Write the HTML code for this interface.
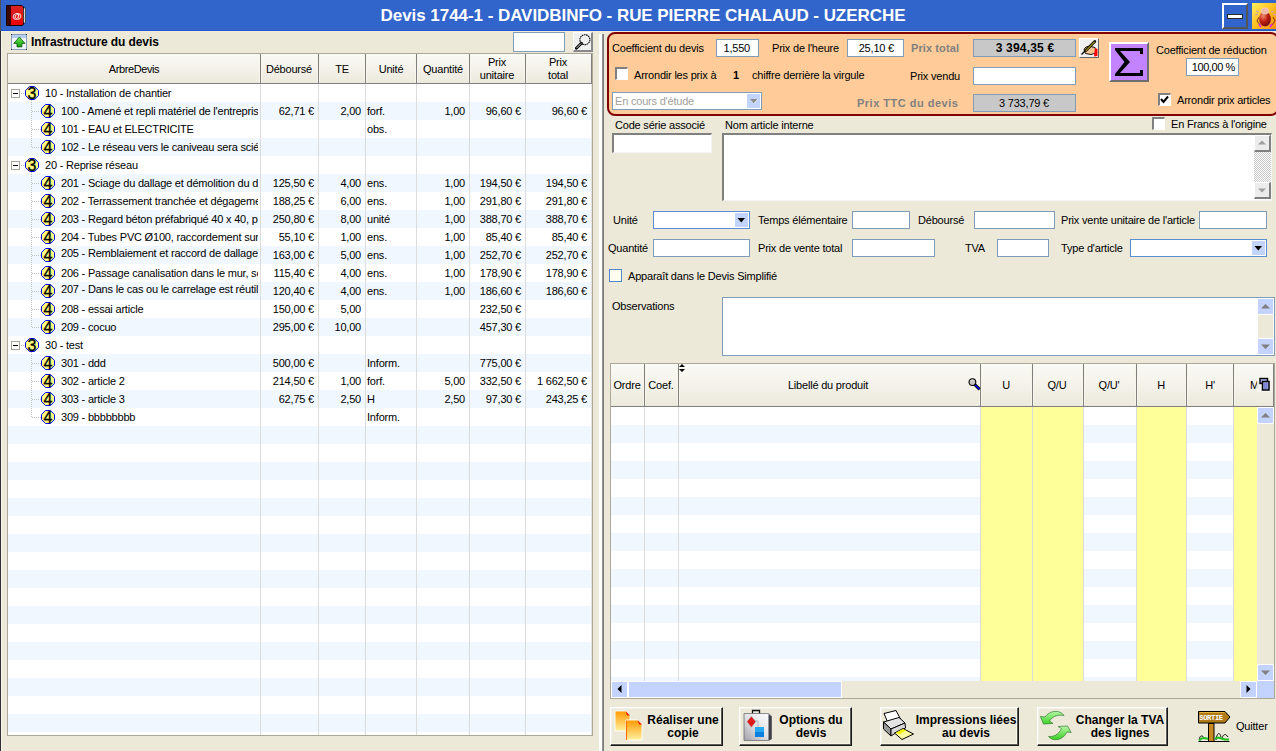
<!DOCTYPE html><html><head><meta charset="utf-8"><style>
html,body{margin:0;padding:0;}
body{width:1276px;height:751px;overflow:hidden;position:relative;background:#ECE9D8;font-family:'Liberation Sans', sans-serif;}
div{box-sizing:border-box;}
svg{position:absolute;}
</style></head><body>
<div style="position:absolute;left:0px;top:0px;width:1276px;height:31px;background:#3165CB;"></div>
<div style="position:absolute;left:0px;top:30px;width:1276px;height:1px;background:#2456C6;"></div>
<div style="position:absolute;left:0px;top:31px;width:1276px;height:1px;background:#F0EDE0;"></div>
<div style="position:absolute;left:0px;top:0px;width:1px;height:31px;background:#505050;"></div>
<div style="position:absolute;left:0px;top:31px;width:1px;height:720px;background:#2E2E34;"></div>
<div style="position:absolute;left:1px;top:31px;width:1px;height:720px;background:#F8F4E6;"></div>
<div style="left:343px;width:600px;text-align:center;position:absolute;top:7px;font-family:'Liberation Sans', sans-serif;font-size:17px;line-height:17px;font-weight:bold;color:#fff;white-space:nowrap;letter-spacing:-0.05px;">Devis 1744-1 - DAVIDBINFO - RUE PIERRE CHALAUD - UZERCHE</div>
<svg style="left:6px;top:5px" width="20" height="21" viewBox="0 0 20 21">
<defs><linearGradient id="rb" x1="0" y1="0" x2="0" y2="1"><stop offset="0" stop-color="#D82424"/><stop offset="1" stop-color="#F00000"/></linearGradient></defs>
<path d="M0.5 0.5 H16 L17.5 2 V19.5 L16 20.5 H0.5 Z" fill="url(#rb)" stroke="#1A0000" stroke-width="1"/>
<rect x="1" y="1" width="4" height="19" fill="#3C0606"/>
<rect x="17.5" y="3" width="2" height="15" fill="#E0E0E0" stroke="#111" stroke-width="0.6"/>
<path d="M17.5 8 H19.5 M17.5 13 H19.5" stroke="#888" stroke-width="0.6"/>
<text x="11.2" y="13.6" text-anchor="middle" font-family="Liberation Sans" font-weight="bold" font-size="9.5" fill="#fff">@</text>
</svg>
<div style="position:absolute;left:1222px;top:3px;width:26px;height:26px;background:#3165CB;border-top:2px solid #fff;border-left:2px solid #fff;border-right:2px solid #555;border-bottom:2px solid #555;"></div>
<div style="position:absolute;left:1228px;top:15px;width:14px;height:3px;background:#fff;outline:1px solid #2A2A2A;"></div>
<svg style="left:1252px;top:3px" width="24" height="26" viewBox="0 0 24 26">
<defs><linearGradient id="bg1" x1="0" y1="0" x2="1" y2="1"><stop offset="0" stop-color="#FFF060"/><stop offset="0.5" stop-color="#FFC020"/><stop offset="1" stop-color="#FF8A00"/></linearGradient>
<radialGradient id="bug" cx="0.35" cy="0.3" r="0.75"><stop offset="0" stop-color="#F09070"/><stop offset="0.5" stop-color="#C02010"/><stop offset="1" stop-color="#700808"/></radialGradient></defs>
<rect width="24" height="26" fill="url(#bg1)"/>
<path d="M7 14 L5 18 L8 22 M21 14 L23 18 L20 22" fill="none" stroke="#803020" stroke-width="1"/>
<path d="M7 21 L9 24 M20 21 L18 24" stroke="#E020E0" stroke-width="1.6"/>
<path d="M4 8 L7 9 M3 12 L6 11 M22 8 L19 9 M24 12 L21 11" stroke="#C0A0C0" stroke-width="1.2"/>
<ellipse cx="13" cy="16" rx="6" ry="7.5" fill="url(#bug)" stroke="#C8A8A8" stroke-width="0.5" stroke-dasharray="1 1"/>
<ellipse cx="13" cy="8" rx="3.8" ry="3.2" fill="#F0B8A8" stroke="#E8E0E0" stroke-width="0.6" stroke-dasharray="1 0.6"/>
</svg>
<svg style="left:11px;top:34px" width="16" height="16" viewBox="0 0 16 16">
<defs><linearGradient id="ga" x1="0" y1="0" x2="0" y2="1"><stop offset="0" stop-color="#70E850"/><stop offset="1" stop-color="#10A010"/></linearGradient></defs>
<rect x="0.5" y="0.5" width="15" height="15" fill="#F0F3FA" stroke="#8C9DBE"/>
<rect x="1" y="1" width="14" height="3" fill="#B4CEF2"/>
<rect x="0" y="0" width="1" height="1" fill="#333"/><rect x="15" y="0" width="1" height="1" fill="#333"/><rect x="0" y="15" width="1" height="1" fill="#333"/><rect x="15" y="15" width="1" height="1" fill="#333"/>
<path d="M8.4 3 L14 9.4 L10.9 9.4 L10.9 12.9 L6 12.9 L6 9.4 L2.8 9.4 Z" fill="url(#ga)" stroke="#0A5A0A" stroke-width="0.8" stroke-linejoin="round"/>
</svg>
<div style="left:31px;position:absolute;top:36px;font-family:'Liberation Sans', sans-serif;font-size:12px;line-height:12px;font-weight:bold;color:#000;white-space:nowrap;letter-spacing:-0.1px;">Infrastructure du devis</div>
<div style="position:absolute;left:513px;top:32px;width:52px;height:20px;background:#fff;border:1px solid #7F9DB9;"></div>
<div style="position:absolute;left:573px;top:32px;width:20px;height:20px;background:#F0F0F0;border-right:2px solid #888;border-bottom:2px solid #888;border-top:1px solid #fff;border-left:1px solid #fff;"></div>
<svg style="left:575px;top:33px" width="16" height="17" viewBox="0 0 16 17">
<circle cx="9.9" cy="6.7" r="5" fill="none" stroke="#000" stroke-width="1.1" stroke-dasharray="1.6 0.6"/>
<path d="M6.4 10.2 L1.3 15.3" stroke="#000" stroke-width="2.8" stroke-linecap="round"/>
<path d="M6.2 10.4 L1.5 15.1" stroke="#E8F0E8" stroke-width="0.9"/>
</svg>
<div style="position:absolute;left:7px;top:53px;width:586px;height:683px;background:#fff;border:1px solid #ACA899;"></div>
<div style="position:absolute;left:8px;top:102px;width:583px;height:18px;background:#F0F7FE;"></div>
<div style="position:absolute;left:8px;top:138px;width:583px;height:18px;background:#F0F7FE;"></div>
<div style="position:absolute;left:8px;top:174px;width:583px;height:18px;background:#F0F7FE;"></div>
<div style="position:absolute;left:8px;top:210px;width:583px;height:18px;background:#F0F7FE;"></div>
<div style="position:absolute;left:8px;top:246px;width:583px;height:18px;background:#F0F7FE;"></div>
<div style="position:absolute;left:8px;top:282px;width:583px;height:18px;background:#F0F7FE;"></div>
<div style="position:absolute;left:8px;top:318px;width:583px;height:18px;background:#F0F7FE;"></div>
<div style="position:absolute;left:8px;top:354px;width:583px;height:18px;background:#F0F7FE;"></div>
<div style="position:absolute;left:8px;top:390px;width:583px;height:18px;background:#F0F7FE;"></div>
<div style="position:absolute;left:8px;top:426px;width:583px;height:18px;background:#F0F7FE;"></div>
<div style="position:absolute;left:8px;top:462px;width:583px;height:18px;background:#F0F7FE;"></div>
<div style="position:absolute;left:8px;top:498px;width:583px;height:18px;background:#F0F7FE;"></div>
<div style="position:absolute;left:8px;top:534px;width:583px;height:18px;background:#F0F7FE;"></div>
<div style="position:absolute;left:8px;top:570px;width:583px;height:18px;background:#F0F7FE;"></div>
<div style="position:absolute;left:8px;top:606px;width:583px;height:18px;background:#F0F7FE;"></div>
<div style="position:absolute;left:8px;top:642px;width:583px;height:18px;background:#F0F7FE;"></div>
<div style="position:absolute;left:8px;top:678px;width:583px;height:18px;background:#F0F7FE;"></div>
<div style="position:absolute;left:8px;top:714px;width:583px;height:18px;background:#F0F7FE;"></div>
<div style="position:absolute;left:8px;top:54px;width:584px;height:30px;background:linear-gradient(#FAFAF6,#F4F2EA 50%,#ECE9DC);border-bottom:1px solid #808080;"></div>
<div style="position:absolute;left:591px;top:54px;width:1px;height:30px;background:#808080;"></div>
<div style="position:absolute;left:591px;top:84px;width:1px;height:651px;background:#E4E4E4;"></div>
<div style="position:absolute;left:260px;top:54px;width:1px;height:29px;background:#808080;"></div>
<div style="position:absolute;left:259px;top:55px;width:1px;height:27px;background:#F8F6EA;"></div>
<div style="position:absolute;left:261px;top:55px;width:1px;height:27px;background:#F8F6EA;"></div>
<div style="position:absolute;left:260px;top:84px;width:1px;height:651px;background:#DCDCDC;"></div>
<div style="position:absolute;left:318px;top:54px;width:1px;height:29px;background:#808080;"></div>
<div style="position:absolute;left:317px;top:55px;width:1px;height:27px;background:#F8F6EA;"></div>
<div style="position:absolute;left:319px;top:55px;width:1px;height:27px;background:#F8F6EA;"></div>
<div style="position:absolute;left:318px;top:84px;width:1px;height:651px;background:#DCDCDC;"></div>
<div style="position:absolute;left:365px;top:54px;width:1px;height:29px;background:#808080;"></div>
<div style="position:absolute;left:364px;top:55px;width:1px;height:27px;background:#F8F6EA;"></div>
<div style="position:absolute;left:366px;top:55px;width:1px;height:27px;background:#F8F6EA;"></div>
<div style="position:absolute;left:365px;top:84px;width:1px;height:651px;background:#DCDCDC;"></div>
<div style="position:absolute;left:416px;top:54px;width:1px;height:29px;background:#808080;"></div>
<div style="position:absolute;left:415px;top:55px;width:1px;height:27px;background:#F8F6EA;"></div>
<div style="position:absolute;left:417px;top:55px;width:1px;height:27px;background:#F8F6EA;"></div>
<div style="position:absolute;left:416px;top:84px;width:1px;height:651px;background:#DCDCDC;"></div>
<div style="position:absolute;left:469px;top:54px;width:1px;height:29px;background:#808080;"></div>
<div style="position:absolute;left:468px;top:55px;width:1px;height:27px;background:#F8F6EA;"></div>
<div style="position:absolute;left:470px;top:55px;width:1px;height:27px;background:#F8F6EA;"></div>
<div style="position:absolute;left:469px;top:84px;width:1px;height:651px;background:#DCDCDC;"></div>
<div style="position:absolute;left:525px;top:54px;width:1px;height:29px;background:#808080;"></div>
<div style="position:absolute;left:524px;top:55px;width:1px;height:27px;background:#F8F6EA;"></div>
<div style="position:absolute;left:526px;top:55px;width:1px;height:27px;background:#F8F6EA;"></div>
<div style="position:absolute;left:525px;top:84px;width:1px;height:651px;background:#DCDCDC;"></div>
<div style="left:-166px;width:600px;text-align:center;position:absolute;top:64px;font-family:'Liberation Sans', sans-serif;font-size:11px;line-height:11px;font-weight:normal;color:#000;white-space:nowrap;letter-spacing:-0.4px;">ArbreDevis</div>
<div style="left:-11px;width:600px;text-align:center;position:absolute;top:64px;font-family:'Liberation Sans', sans-serif;font-size:11px;line-height:11px;font-weight:normal;color:#000;white-space:nowrap;letter-spacing:-0.2px;">Déboursé</div>
<div style="left:42px;width:600px;text-align:center;position:absolute;top:64px;font-family:'Liberation Sans', sans-serif;font-size:11px;line-height:11px;font-weight:normal;color:#000;white-space:nowrap;letter-spacing:-0.2px;">TE</div>
<div style="left:91px;width:600px;text-align:center;position:absolute;top:64px;font-family:'Liberation Sans', sans-serif;font-size:11px;line-height:11px;font-weight:normal;color:#000;white-space:nowrap;letter-spacing:-0.2px;">Unité</div>
<div style="left:143px;width:600px;text-align:center;position:absolute;top:64px;font-family:'Liberation Sans', sans-serif;font-size:11px;line-height:11px;font-weight:normal;color:#000;white-space:nowrap;letter-spacing:-0.2px;">Quantité</div>
<div style="left:197px;width:600px;text-align:center;position:absolute;top:57px;font-family:'Liberation Sans', sans-serif;font-size:11px;line-height:11px;font-weight:normal;color:#000;white-space:nowrap;letter-spacing:-0.2px;">Prix</div>
<div style="left:197px;width:600px;text-align:center;position:absolute;top:70px;font-family:'Liberation Sans', sans-serif;font-size:11px;line-height:11px;font-weight:normal;color:#000;white-space:nowrap;letter-spacing:-0.2px;">unitaire</div>
<div style="left:258px;width:600px;text-align:center;position:absolute;top:57px;font-family:'Liberation Sans', sans-serif;font-size:11px;line-height:11px;font-weight:normal;color:#000;white-space:nowrap;letter-spacing:-0.2px;">Prix</div>
<div style="left:258px;width:600px;text-align:center;position:absolute;top:70px;font-family:'Liberation Sans', sans-serif;font-size:11px;line-height:11px;font-weight:normal;color:#000;white-space:nowrap;letter-spacing:-0.2px;">total</div>
<div style="position:absolute;left:31px;top:100px;width:1px;height:47px;background:repeating-linear-gradient(#C4C4C4 0 1px,transparent 1px 2px);"></div>
<div style="position:absolute;left:31px;top:172px;width:1px;height:155px;background:repeating-linear-gradient(#C4C4C4 0 1px,transparent 1px 2px);"></div>
<div style="position:absolute;left:31px;top:352px;width:1px;height:65px;background:repeating-linear-gradient(#C4C4C4 0 1px,transparent 1px 2px);"></div>
<div style="position:absolute;left:11px;top:89px;width:9px;height:9px;background:#fff;border:1px solid #A8A498;"></div>
<div style="position:absolute;left:13px;top:93px;width:5px;height:1px;background:#000;"></div>
<div style="position:absolute;left:21px;top:93px;width:4px;height:1px;background:repeating-linear-gradient(90deg,#C4C4C4 0 1px,transparent 1px 2px);"></div>
<svg style="left:25px;top:86px" width="14" height="14" viewBox="0 0 14 14">
<path d="M4.5 0.5 H9.5 L13.5 4.5 V9.5 L9.5 13.5 H4.5 L0.5 9.5 V4.5 Z" fill="#FFFF80" stroke="#0000F0" stroke-width="1"/>
<text x="7" y="13.2" text-anchor="middle" font-family="Liberation Sans" font-size="16" fill="#000" stroke="#000" stroke-width="0.35">3</text></svg>
<div style="left:45px;position:absolute;top:88px;font-family:'Liberation Sans', sans-serif;font-size:11px;line-height:11px;font-weight:normal;color:#000;white-space:nowrap;letter-spacing:-0.2px;">10 - Installation de chantier</div>
<div style="position:absolute;left:32px;top:111px;width:9px;height:1px;background:repeating-linear-gradient(90deg,#C4C4C4 0 1px,transparent 1px 2px);"></div>
<svg style="left:41px;top:104px" width="14" height="14" viewBox="0 0 14 14">
<path d="M4.5 0.5 H9.5 L13.5 4.5 V9.5 L9.5 13.5 H4.5 L0.5 9.5 V4.5 Z" fill="#FFFF80" stroke="#0000F0" stroke-width="1"/>
<text x="7" y="13.2" text-anchor="middle" font-family="Liberation Sans" font-size="16" fill="#000" stroke="#000" stroke-width="0.35">4</text></svg>
<div style="position:absolute;left:61px;top:106px;width:197px;overflow:hidden;font-family:'Liberation Sans', sans-serif;font-size:11px;line-height:11px;white-space:nowrap;letter-spacing:-0.2px;">100 - Amené et repli matériel de l&#x27;entreprise</div>
<div style="right:962px;position:absolute;top:106px;font-family:'Liberation Sans', sans-serif;font-size:11px;line-height:11px;font-weight:normal;color:#000;white-space:nowrap;letter-spacing:-0.2px;">62,71 €</div>
<div style="right:915px;position:absolute;top:106px;font-family:'Liberation Sans', sans-serif;font-size:11px;line-height:11px;font-weight:normal;color:#000;white-space:nowrap;letter-spacing:-0.2px;">2,00</div>
<div style="left:367px;position:absolute;top:106px;font-family:'Liberation Sans', sans-serif;font-size:11px;line-height:11px;font-weight:normal;color:#000;white-space:nowrap;letter-spacing:-0.2px;">forf.</div>
<div style="right:811px;position:absolute;top:106px;font-family:'Liberation Sans', sans-serif;font-size:11px;line-height:11px;font-weight:normal;color:#000;white-space:nowrap;letter-spacing:-0.2px;">1,00</div>
<div style="right:755px;position:absolute;top:106px;font-family:'Liberation Sans', sans-serif;font-size:11px;line-height:11px;font-weight:normal;color:#000;white-space:nowrap;letter-spacing:-0.2px;">96,60 €</div>
<div style="right:689px;position:absolute;top:106px;font-family:'Liberation Sans', sans-serif;font-size:11px;line-height:11px;font-weight:normal;color:#000;white-space:nowrap;letter-spacing:-0.2px;">96,60 €</div>
<div style="position:absolute;left:32px;top:129px;width:9px;height:1px;background:repeating-linear-gradient(90deg,#C4C4C4 0 1px,transparent 1px 2px);"></div>
<svg style="left:41px;top:122px" width="14" height="14" viewBox="0 0 14 14">
<path d="M4.5 0.5 H9.5 L13.5 4.5 V9.5 L9.5 13.5 H4.5 L0.5 9.5 V4.5 Z" fill="#FFFF80" stroke="#0000F0" stroke-width="1"/>
<text x="7" y="13.2" text-anchor="middle" font-family="Liberation Sans" font-size="16" fill="#000" stroke="#000" stroke-width="0.35">4</text></svg>
<div style="position:absolute;left:61px;top:124px;width:197px;overflow:hidden;font-family:'Liberation Sans', sans-serif;font-size:11px;line-height:11px;white-space:nowrap;letter-spacing:-0.2px;">101 - EAU et ELECTRICITE</div>
<div style="left:367px;position:absolute;top:124px;font-family:'Liberation Sans', sans-serif;font-size:11px;line-height:11px;font-weight:normal;color:#000;white-space:nowrap;letter-spacing:-0.2px;">obs.</div>
<div style="position:absolute;left:32px;top:147px;width:9px;height:1px;background:repeating-linear-gradient(90deg,#C4C4C4 0 1px,transparent 1px 2px);"></div>
<svg style="left:41px;top:140px" width="14" height="14" viewBox="0 0 14 14">
<path d="M4.5 0.5 H9.5 L13.5 4.5 V9.5 L9.5 13.5 H4.5 L0.5 9.5 V4.5 Z" fill="#FFFF80" stroke="#0000F0" stroke-width="1"/>
<text x="7" y="13.2" text-anchor="middle" font-family="Liberation Sans" font-size="16" fill="#000" stroke="#000" stroke-width="0.35">4</text></svg>
<div style="position:absolute;left:61px;top:142px;width:197px;overflow:hidden;font-family:'Liberation Sans', sans-serif;font-size:11px;line-height:11px;white-space:nowrap;letter-spacing:-0.2px;">102 - Le réseau vers le caniveau sera scié</div>
<div style="position:absolute;left:11px;top:161px;width:9px;height:9px;background:#fff;border:1px solid #A8A498;"></div>
<div style="position:absolute;left:13px;top:165px;width:5px;height:1px;background:#000;"></div>
<div style="position:absolute;left:21px;top:165px;width:4px;height:1px;background:repeating-linear-gradient(90deg,#C4C4C4 0 1px,transparent 1px 2px);"></div>
<svg style="left:25px;top:158px" width="14" height="14" viewBox="0 0 14 14">
<path d="M4.5 0.5 H9.5 L13.5 4.5 V9.5 L9.5 13.5 H4.5 L0.5 9.5 V4.5 Z" fill="#FFFF80" stroke="#0000F0" stroke-width="1"/>
<text x="7" y="13.2" text-anchor="middle" font-family="Liberation Sans" font-size="16" fill="#000" stroke="#000" stroke-width="0.35">3</text></svg>
<div style="left:45px;position:absolute;top:160px;font-family:'Liberation Sans', sans-serif;font-size:11px;line-height:11px;font-weight:normal;color:#000;white-space:nowrap;letter-spacing:-0.2px;">20 - Reprise réseau</div>
<div style="position:absolute;left:32px;top:183px;width:9px;height:1px;background:repeating-linear-gradient(90deg,#C4C4C4 0 1px,transparent 1px 2px);"></div>
<svg style="left:41px;top:176px" width="14" height="14" viewBox="0 0 14 14">
<path d="M4.5 0.5 H9.5 L13.5 4.5 V9.5 L9.5 13.5 H4.5 L0.5 9.5 V4.5 Z" fill="#FFFF80" stroke="#0000F0" stroke-width="1"/>
<text x="7" y="13.2" text-anchor="middle" font-family="Liberation Sans" font-size="16" fill="#000" stroke="#000" stroke-width="0.35">4</text></svg>
<div style="position:absolute;left:61px;top:178px;width:197px;overflow:hidden;font-family:'Liberation Sans', sans-serif;font-size:11px;line-height:11px;white-space:nowrap;letter-spacing:-0.2px;">201 - Sciage du dallage et démolition du dallage</div>
<div style="right:962px;position:absolute;top:178px;font-family:'Liberation Sans', sans-serif;font-size:11px;line-height:11px;font-weight:normal;color:#000;white-space:nowrap;letter-spacing:-0.2px;">125,50 €</div>
<div style="right:915px;position:absolute;top:178px;font-family:'Liberation Sans', sans-serif;font-size:11px;line-height:11px;font-weight:normal;color:#000;white-space:nowrap;letter-spacing:-0.2px;">4,00</div>
<div style="left:367px;position:absolute;top:178px;font-family:'Liberation Sans', sans-serif;font-size:11px;line-height:11px;font-weight:normal;color:#000;white-space:nowrap;letter-spacing:-0.2px;">ens.</div>
<div style="right:811px;position:absolute;top:178px;font-family:'Liberation Sans', sans-serif;font-size:11px;line-height:11px;font-weight:normal;color:#000;white-space:nowrap;letter-spacing:-0.2px;">1,00</div>
<div style="right:755px;position:absolute;top:178px;font-family:'Liberation Sans', sans-serif;font-size:11px;line-height:11px;font-weight:normal;color:#000;white-space:nowrap;letter-spacing:-0.2px;">194,50 €</div>
<div style="right:689px;position:absolute;top:178px;font-family:'Liberation Sans', sans-serif;font-size:11px;line-height:11px;font-weight:normal;color:#000;white-space:nowrap;letter-spacing:-0.2px;">194,50 €</div>
<div style="position:absolute;left:32px;top:201px;width:9px;height:1px;background:repeating-linear-gradient(90deg,#C4C4C4 0 1px,transparent 1px 2px);"></div>
<svg style="left:41px;top:194px" width="14" height="14" viewBox="0 0 14 14">
<path d="M4.5 0.5 H9.5 L13.5 4.5 V9.5 L9.5 13.5 H4.5 L0.5 9.5 V4.5 Z" fill="#FFFF80" stroke="#0000F0" stroke-width="1"/>
<text x="7" y="13.2" text-anchor="middle" font-family="Liberation Sans" font-size="16" fill="#000" stroke="#000" stroke-width="0.35">4</text></svg>
<div style="position:absolute;left:61px;top:196px;width:197px;overflow:hidden;font-family:'Liberation Sans', sans-serif;font-size:11px;line-height:11px;white-space:nowrap;letter-spacing:-0.2px;">202 - Terrassement tranchée et dégagement</div>
<div style="right:962px;position:absolute;top:196px;font-family:'Liberation Sans', sans-serif;font-size:11px;line-height:11px;font-weight:normal;color:#000;white-space:nowrap;letter-spacing:-0.2px;">188,25 €</div>
<div style="right:915px;position:absolute;top:196px;font-family:'Liberation Sans', sans-serif;font-size:11px;line-height:11px;font-weight:normal;color:#000;white-space:nowrap;letter-spacing:-0.2px;">6,00</div>
<div style="left:367px;position:absolute;top:196px;font-family:'Liberation Sans', sans-serif;font-size:11px;line-height:11px;font-weight:normal;color:#000;white-space:nowrap;letter-spacing:-0.2px;">ens.</div>
<div style="right:811px;position:absolute;top:196px;font-family:'Liberation Sans', sans-serif;font-size:11px;line-height:11px;font-weight:normal;color:#000;white-space:nowrap;letter-spacing:-0.2px;">1,00</div>
<div style="right:755px;position:absolute;top:196px;font-family:'Liberation Sans', sans-serif;font-size:11px;line-height:11px;font-weight:normal;color:#000;white-space:nowrap;letter-spacing:-0.2px;">291,80 €</div>
<div style="right:689px;position:absolute;top:196px;font-family:'Liberation Sans', sans-serif;font-size:11px;line-height:11px;font-weight:normal;color:#000;white-space:nowrap;letter-spacing:-0.2px;">291,80 €</div>
<div style="position:absolute;left:32px;top:219px;width:9px;height:1px;background:repeating-linear-gradient(90deg,#C4C4C4 0 1px,transparent 1px 2px);"></div>
<svg style="left:41px;top:212px" width="14" height="14" viewBox="0 0 14 14">
<path d="M4.5 0.5 H9.5 L13.5 4.5 V9.5 L9.5 13.5 H4.5 L0.5 9.5 V4.5 Z" fill="#FFFF80" stroke="#0000F0" stroke-width="1"/>
<text x="7" y="13.2" text-anchor="middle" font-family="Liberation Sans" font-size="16" fill="#000" stroke="#000" stroke-width="0.35">4</text></svg>
<div style="position:absolute;left:61px;top:214px;width:197px;overflow:hidden;font-family:'Liberation Sans', sans-serif;font-size:11px;line-height:11px;white-space:nowrap;letter-spacing:-0.2px;">203 - Regard béton préfabriqué 40 x 40, pose</div>
<div style="right:962px;position:absolute;top:214px;font-family:'Liberation Sans', sans-serif;font-size:11px;line-height:11px;font-weight:normal;color:#000;white-space:nowrap;letter-spacing:-0.2px;">250,80 €</div>
<div style="right:915px;position:absolute;top:214px;font-family:'Liberation Sans', sans-serif;font-size:11px;line-height:11px;font-weight:normal;color:#000;white-space:nowrap;letter-spacing:-0.2px;">8,00</div>
<div style="left:367px;position:absolute;top:214px;font-family:'Liberation Sans', sans-serif;font-size:11px;line-height:11px;font-weight:normal;color:#000;white-space:nowrap;letter-spacing:-0.2px;">unité</div>
<div style="right:811px;position:absolute;top:214px;font-family:'Liberation Sans', sans-serif;font-size:11px;line-height:11px;font-weight:normal;color:#000;white-space:nowrap;letter-spacing:-0.2px;">1,00</div>
<div style="right:755px;position:absolute;top:214px;font-family:'Liberation Sans', sans-serif;font-size:11px;line-height:11px;font-weight:normal;color:#000;white-space:nowrap;letter-spacing:-0.2px;">388,70 €</div>
<div style="right:689px;position:absolute;top:214px;font-family:'Liberation Sans', sans-serif;font-size:11px;line-height:11px;font-weight:normal;color:#000;white-space:nowrap;letter-spacing:-0.2px;">388,70 €</div>
<div style="position:absolute;left:32px;top:237px;width:9px;height:1px;background:repeating-linear-gradient(90deg,#C4C4C4 0 1px,transparent 1px 2px);"></div>
<svg style="left:41px;top:230px" width="14" height="14" viewBox="0 0 14 14">
<path d="M4.5 0.5 H9.5 L13.5 4.5 V9.5 L9.5 13.5 H4.5 L0.5 9.5 V4.5 Z" fill="#FFFF80" stroke="#0000F0" stroke-width="1"/>
<text x="7" y="13.2" text-anchor="middle" font-family="Liberation Sans" font-size="16" fill="#000" stroke="#000" stroke-width="0.35">4</text></svg>
<div style="position:absolute;left:61px;top:232px;width:197px;overflow:hidden;font-family:'Liberation Sans', sans-serif;font-size:11px;line-height:11px;white-space:nowrap;letter-spacing:-0.2px;">204 - Tubes PVC Ø100, raccordement sur</div>
<div style="right:962px;position:absolute;top:232px;font-family:'Liberation Sans', sans-serif;font-size:11px;line-height:11px;font-weight:normal;color:#000;white-space:nowrap;letter-spacing:-0.2px;">55,10 €</div>
<div style="right:915px;position:absolute;top:232px;font-family:'Liberation Sans', sans-serif;font-size:11px;line-height:11px;font-weight:normal;color:#000;white-space:nowrap;letter-spacing:-0.2px;">1,00</div>
<div style="left:367px;position:absolute;top:232px;font-family:'Liberation Sans', sans-serif;font-size:11px;line-height:11px;font-weight:normal;color:#000;white-space:nowrap;letter-spacing:-0.2px;">ens.</div>
<div style="right:811px;position:absolute;top:232px;font-family:'Liberation Sans', sans-serif;font-size:11px;line-height:11px;font-weight:normal;color:#000;white-space:nowrap;letter-spacing:-0.2px;">1,00</div>
<div style="right:755px;position:absolute;top:232px;font-family:'Liberation Sans', sans-serif;font-size:11px;line-height:11px;font-weight:normal;color:#000;white-space:nowrap;letter-spacing:-0.2px;">85,40 €</div>
<div style="right:689px;position:absolute;top:232px;font-family:'Liberation Sans', sans-serif;font-size:11px;line-height:11px;font-weight:normal;color:#000;white-space:nowrap;letter-spacing:-0.2px;">85,40 €</div>
<div style="position:absolute;left:32px;top:255px;width:9px;height:1px;background:repeating-linear-gradient(90deg,#C4C4C4 0 1px,transparent 1px 2px);"></div>
<svg style="left:41px;top:248px" width="14" height="14" viewBox="0 0 14 14">
<path d="M4.5 0.5 H9.5 L13.5 4.5 V9.5 L9.5 13.5 H4.5 L0.5 9.5 V4.5 Z" fill="#FFFF80" stroke="#0000F0" stroke-width="1"/>
<text x="7" y="13.2" text-anchor="middle" font-family="Liberation Sans" font-size="16" fill="#000" stroke="#000" stroke-width="0.35">4</text></svg>
<div style="position:absolute;left:61px;top:248px;width:197px;overflow:hidden;font-family:'Liberation Sans', sans-serif;font-size:11px;line-height:11px;white-space:nowrap;letter-spacing:-0.2px;">205 - Remblaiement et raccord de dallage</div>
<div style="right:962px;position:absolute;top:250px;font-family:'Liberation Sans', sans-serif;font-size:11px;line-height:11px;font-weight:normal;color:#000;white-space:nowrap;letter-spacing:-0.2px;">163,00 €</div>
<div style="right:915px;position:absolute;top:250px;font-family:'Liberation Sans', sans-serif;font-size:11px;line-height:11px;font-weight:normal;color:#000;white-space:nowrap;letter-spacing:-0.2px;">5,00</div>
<div style="left:367px;position:absolute;top:250px;font-family:'Liberation Sans', sans-serif;font-size:11px;line-height:11px;font-weight:normal;color:#000;white-space:nowrap;letter-spacing:-0.2px;">ens.</div>
<div style="right:811px;position:absolute;top:250px;font-family:'Liberation Sans', sans-serif;font-size:11px;line-height:11px;font-weight:normal;color:#000;white-space:nowrap;letter-spacing:-0.2px;">1,00</div>
<div style="right:755px;position:absolute;top:250px;font-family:'Liberation Sans', sans-serif;font-size:11px;line-height:11px;font-weight:normal;color:#000;white-space:nowrap;letter-spacing:-0.2px;">252,70 €</div>
<div style="right:689px;position:absolute;top:250px;font-family:'Liberation Sans', sans-serif;font-size:11px;line-height:11px;font-weight:normal;color:#000;white-space:nowrap;letter-spacing:-0.2px;">252,70 €</div>
<div style="position:absolute;left:32px;top:273px;width:9px;height:1px;background:repeating-linear-gradient(90deg,#C4C4C4 0 1px,transparent 1px 2px);"></div>
<svg style="left:41px;top:266px" width="14" height="14" viewBox="0 0 14 14">
<path d="M4.5 0.5 H9.5 L13.5 4.5 V9.5 L9.5 13.5 H4.5 L0.5 9.5 V4.5 Z" fill="#FFFF80" stroke="#0000F0" stroke-width="1"/>
<text x="7" y="13.2" text-anchor="middle" font-family="Liberation Sans" font-size="16" fill="#000" stroke="#000" stroke-width="0.35">4</text></svg>
<div style="position:absolute;left:61px;top:268px;width:197px;overflow:hidden;font-family:'Liberation Sans', sans-serif;font-size:11px;line-height:11px;white-space:nowrap;letter-spacing:-0.2px;">206 - Passage canalisation dans le mur, sous</div>
<div style="right:962px;position:absolute;top:268px;font-family:'Liberation Sans', sans-serif;font-size:11px;line-height:11px;font-weight:normal;color:#000;white-space:nowrap;letter-spacing:-0.2px;">115,40 €</div>
<div style="right:915px;position:absolute;top:268px;font-family:'Liberation Sans', sans-serif;font-size:11px;line-height:11px;font-weight:normal;color:#000;white-space:nowrap;letter-spacing:-0.2px;">4,00</div>
<div style="left:367px;position:absolute;top:268px;font-family:'Liberation Sans', sans-serif;font-size:11px;line-height:11px;font-weight:normal;color:#000;white-space:nowrap;letter-spacing:-0.2px;">ens.</div>
<div style="right:811px;position:absolute;top:268px;font-family:'Liberation Sans', sans-serif;font-size:11px;line-height:11px;font-weight:normal;color:#000;white-space:nowrap;letter-spacing:-0.2px;">1,00</div>
<div style="right:755px;position:absolute;top:268px;font-family:'Liberation Sans', sans-serif;font-size:11px;line-height:11px;font-weight:normal;color:#000;white-space:nowrap;letter-spacing:-0.2px;">178,90 €</div>
<div style="right:689px;position:absolute;top:268px;font-family:'Liberation Sans', sans-serif;font-size:11px;line-height:11px;font-weight:normal;color:#000;white-space:nowrap;letter-spacing:-0.2px;">178,90 €</div>
<div style="position:absolute;left:32px;top:291px;width:9px;height:1px;background:repeating-linear-gradient(90deg,#C4C4C4 0 1px,transparent 1px 2px);"></div>
<svg style="left:41px;top:284px" width="14" height="14" viewBox="0 0 14 14">
<path d="M4.5 0.5 H9.5 L13.5 4.5 V9.5 L9.5 13.5 H4.5 L0.5 9.5 V4.5 Z" fill="#FFFF80" stroke="#0000F0" stroke-width="1"/>
<text x="7" y="13.2" text-anchor="middle" font-family="Liberation Sans" font-size="16" fill="#000" stroke="#000" stroke-width="0.35">4</text></svg>
<div style="position:absolute;left:61px;top:284px;width:197px;overflow:hidden;font-family:'Liberation Sans', sans-serif;font-size:11px;line-height:11px;white-space:nowrap;letter-spacing:-0.2px;">207 - Dans le cas ou le carrelage est réutilisé</div>
<div style="right:962px;position:absolute;top:286px;font-family:'Liberation Sans', sans-serif;font-size:11px;line-height:11px;font-weight:normal;color:#000;white-space:nowrap;letter-spacing:-0.2px;">120,40 €</div>
<div style="right:915px;position:absolute;top:286px;font-family:'Liberation Sans', sans-serif;font-size:11px;line-height:11px;font-weight:normal;color:#000;white-space:nowrap;letter-spacing:-0.2px;">4,00</div>
<div style="left:367px;position:absolute;top:286px;font-family:'Liberation Sans', sans-serif;font-size:11px;line-height:11px;font-weight:normal;color:#000;white-space:nowrap;letter-spacing:-0.2px;">ens.</div>
<div style="right:811px;position:absolute;top:286px;font-family:'Liberation Sans', sans-serif;font-size:11px;line-height:11px;font-weight:normal;color:#000;white-space:nowrap;letter-spacing:-0.2px;">1,00</div>
<div style="right:755px;position:absolute;top:286px;font-family:'Liberation Sans', sans-serif;font-size:11px;line-height:11px;font-weight:normal;color:#000;white-space:nowrap;letter-spacing:-0.2px;">186,60 €</div>
<div style="right:689px;position:absolute;top:286px;font-family:'Liberation Sans', sans-serif;font-size:11px;line-height:11px;font-weight:normal;color:#000;white-space:nowrap;letter-spacing:-0.2px;">186,60 €</div>
<div style="position:absolute;left:32px;top:309px;width:9px;height:1px;background:repeating-linear-gradient(90deg,#C4C4C4 0 1px,transparent 1px 2px);"></div>
<svg style="left:41px;top:302px" width="14" height="14" viewBox="0 0 14 14">
<path d="M4.5 0.5 H9.5 L13.5 4.5 V9.5 L9.5 13.5 H4.5 L0.5 9.5 V4.5 Z" fill="#FFFF80" stroke="#0000F0" stroke-width="1"/>
<text x="7" y="13.2" text-anchor="middle" font-family="Liberation Sans" font-size="16" fill="#000" stroke="#000" stroke-width="0.35">4</text></svg>
<div style="position:absolute;left:61px;top:304px;width:197px;overflow:hidden;font-family:'Liberation Sans', sans-serif;font-size:11px;line-height:11px;white-space:nowrap;letter-spacing:-0.2px;">208 - essai article</div>
<div style="right:962px;position:absolute;top:304px;font-family:'Liberation Sans', sans-serif;font-size:11px;line-height:11px;font-weight:normal;color:#000;white-space:nowrap;letter-spacing:-0.2px;">150,00 €</div>
<div style="right:915px;position:absolute;top:304px;font-family:'Liberation Sans', sans-serif;font-size:11px;line-height:11px;font-weight:normal;color:#000;white-space:nowrap;letter-spacing:-0.2px;">5,00</div>
<div style="right:755px;position:absolute;top:304px;font-family:'Liberation Sans', sans-serif;font-size:11px;line-height:11px;font-weight:normal;color:#000;white-space:nowrap;letter-spacing:-0.2px;">232,50 €</div>
<div style="position:absolute;left:32px;top:327px;width:9px;height:1px;background:repeating-linear-gradient(90deg,#C4C4C4 0 1px,transparent 1px 2px);"></div>
<svg style="left:41px;top:320px" width="14" height="14" viewBox="0 0 14 14">
<path d="M4.5 0.5 H9.5 L13.5 4.5 V9.5 L9.5 13.5 H4.5 L0.5 9.5 V4.5 Z" fill="#FFFF80" stroke="#0000F0" stroke-width="1"/>
<text x="7" y="13.2" text-anchor="middle" font-family="Liberation Sans" font-size="16" fill="#000" stroke="#000" stroke-width="0.35">4</text></svg>
<div style="position:absolute;left:61px;top:322px;width:197px;overflow:hidden;font-family:'Liberation Sans', sans-serif;font-size:11px;line-height:11px;white-space:nowrap;letter-spacing:-0.2px;">209 - cocuo</div>
<div style="right:962px;position:absolute;top:322px;font-family:'Liberation Sans', sans-serif;font-size:11px;line-height:11px;font-weight:normal;color:#000;white-space:nowrap;letter-spacing:-0.2px;">295,00 €</div>
<div style="right:915px;position:absolute;top:322px;font-family:'Liberation Sans', sans-serif;font-size:11px;line-height:11px;font-weight:normal;color:#000;white-space:nowrap;letter-spacing:-0.2px;">10,00</div>
<div style="right:755px;position:absolute;top:322px;font-family:'Liberation Sans', sans-serif;font-size:11px;line-height:11px;font-weight:normal;color:#000;white-space:nowrap;letter-spacing:-0.2px;">457,30 €</div>
<div style="position:absolute;left:11px;top:341px;width:9px;height:9px;background:#fff;border:1px solid #A8A498;"></div>
<div style="position:absolute;left:13px;top:345px;width:5px;height:1px;background:#000;"></div>
<div style="position:absolute;left:21px;top:345px;width:4px;height:1px;background:repeating-linear-gradient(90deg,#C4C4C4 0 1px,transparent 1px 2px);"></div>
<svg style="left:25px;top:338px" width="14" height="14" viewBox="0 0 14 14">
<path d="M4.5 0.5 H9.5 L13.5 4.5 V9.5 L9.5 13.5 H4.5 L0.5 9.5 V4.5 Z" fill="#FFFF80" stroke="#0000F0" stroke-width="1"/>
<text x="7" y="13.2" text-anchor="middle" font-family="Liberation Sans" font-size="16" fill="#000" stroke="#000" stroke-width="0.35">3</text></svg>
<div style="left:45px;position:absolute;top:340px;font-family:'Liberation Sans', sans-serif;font-size:11px;line-height:11px;font-weight:normal;color:#000;white-space:nowrap;letter-spacing:-0.2px;">30 - test</div>
<div style="position:absolute;left:32px;top:363px;width:9px;height:1px;background:repeating-linear-gradient(90deg,#C4C4C4 0 1px,transparent 1px 2px);"></div>
<svg style="left:41px;top:356px" width="14" height="14" viewBox="0 0 14 14">
<path d="M4.5 0.5 H9.5 L13.5 4.5 V9.5 L9.5 13.5 H4.5 L0.5 9.5 V4.5 Z" fill="#FFFF80" stroke="#0000F0" stroke-width="1"/>
<text x="7" y="13.2" text-anchor="middle" font-family="Liberation Sans" font-size="16" fill="#000" stroke="#000" stroke-width="0.35">4</text></svg>
<div style="position:absolute;left:61px;top:358px;width:197px;overflow:hidden;font-family:'Liberation Sans', sans-serif;font-size:11px;line-height:11px;white-space:nowrap;letter-spacing:-0.2px;">301 - ddd</div>
<div style="right:962px;position:absolute;top:358px;font-family:'Liberation Sans', sans-serif;font-size:11px;line-height:11px;font-weight:normal;color:#000;white-space:nowrap;letter-spacing:-0.2px;">500,00 €</div>
<div style="left:367px;position:absolute;top:358px;font-family:'Liberation Sans', sans-serif;font-size:11px;line-height:11px;font-weight:normal;color:#000;white-space:nowrap;letter-spacing:-0.2px;">Inform.</div>
<div style="right:755px;position:absolute;top:358px;font-family:'Liberation Sans', sans-serif;font-size:11px;line-height:11px;font-weight:normal;color:#000;white-space:nowrap;letter-spacing:-0.2px;">775,00 €</div>
<div style="position:absolute;left:32px;top:381px;width:9px;height:1px;background:repeating-linear-gradient(90deg,#C4C4C4 0 1px,transparent 1px 2px);"></div>
<svg style="left:41px;top:374px" width="14" height="14" viewBox="0 0 14 14">
<path d="M4.5 0.5 H9.5 L13.5 4.5 V9.5 L9.5 13.5 H4.5 L0.5 9.5 V4.5 Z" fill="#FFFF80" stroke="#0000F0" stroke-width="1"/>
<text x="7" y="13.2" text-anchor="middle" font-family="Liberation Sans" font-size="16" fill="#000" stroke="#000" stroke-width="0.35">4</text></svg>
<div style="position:absolute;left:61px;top:376px;width:197px;overflow:hidden;font-family:'Liberation Sans', sans-serif;font-size:11px;line-height:11px;white-space:nowrap;letter-spacing:-0.2px;">302 - article 2</div>
<div style="right:962px;position:absolute;top:376px;font-family:'Liberation Sans', sans-serif;font-size:11px;line-height:11px;font-weight:normal;color:#000;white-space:nowrap;letter-spacing:-0.2px;">214,50 €</div>
<div style="right:915px;position:absolute;top:376px;font-family:'Liberation Sans', sans-serif;font-size:11px;line-height:11px;font-weight:normal;color:#000;white-space:nowrap;letter-spacing:-0.2px;">1,00</div>
<div style="left:367px;position:absolute;top:376px;font-family:'Liberation Sans', sans-serif;font-size:11px;line-height:11px;font-weight:normal;color:#000;white-space:nowrap;letter-spacing:-0.2px;">forf.</div>
<div style="right:811px;position:absolute;top:376px;font-family:'Liberation Sans', sans-serif;font-size:11px;line-height:11px;font-weight:normal;color:#000;white-space:nowrap;letter-spacing:-0.2px;">5,00</div>
<div style="right:755px;position:absolute;top:376px;font-family:'Liberation Sans', sans-serif;font-size:11px;line-height:11px;font-weight:normal;color:#000;white-space:nowrap;letter-spacing:-0.2px;">332,50 €</div>
<div style="right:689px;position:absolute;top:376px;font-family:'Liberation Sans', sans-serif;font-size:11px;line-height:11px;font-weight:normal;color:#000;white-space:nowrap;letter-spacing:-0.2px;">1 662,50 €</div>
<div style="position:absolute;left:32px;top:399px;width:9px;height:1px;background:repeating-linear-gradient(90deg,#C4C4C4 0 1px,transparent 1px 2px);"></div>
<svg style="left:41px;top:392px" width="14" height="14" viewBox="0 0 14 14">
<path d="M4.5 0.5 H9.5 L13.5 4.5 V9.5 L9.5 13.5 H4.5 L0.5 9.5 V4.5 Z" fill="#FFFF80" stroke="#0000F0" stroke-width="1"/>
<text x="7" y="13.2" text-anchor="middle" font-family="Liberation Sans" font-size="16" fill="#000" stroke="#000" stroke-width="0.35">4</text></svg>
<div style="position:absolute;left:61px;top:394px;width:197px;overflow:hidden;font-family:'Liberation Sans', sans-serif;font-size:11px;line-height:11px;white-space:nowrap;letter-spacing:-0.2px;">303 - article 3</div>
<div style="right:962px;position:absolute;top:394px;font-family:'Liberation Sans', sans-serif;font-size:11px;line-height:11px;font-weight:normal;color:#000;white-space:nowrap;letter-spacing:-0.2px;">62,75 €</div>
<div style="right:915px;position:absolute;top:394px;font-family:'Liberation Sans', sans-serif;font-size:11px;line-height:11px;font-weight:normal;color:#000;white-space:nowrap;letter-spacing:-0.2px;">2,50</div>
<div style="left:367px;position:absolute;top:394px;font-family:'Liberation Sans', sans-serif;font-size:11px;line-height:11px;font-weight:normal;color:#000;white-space:nowrap;letter-spacing:-0.2px;">H</div>
<div style="right:811px;position:absolute;top:394px;font-family:'Liberation Sans', sans-serif;font-size:11px;line-height:11px;font-weight:normal;color:#000;white-space:nowrap;letter-spacing:-0.2px;">2,50</div>
<div style="right:755px;position:absolute;top:394px;font-family:'Liberation Sans', sans-serif;font-size:11px;line-height:11px;font-weight:normal;color:#000;white-space:nowrap;letter-spacing:-0.2px;">97,30 €</div>
<div style="right:689px;position:absolute;top:394px;font-family:'Liberation Sans', sans-serif;font-size:11px;line-height:11px;font-weight:normal;color:#000;white-space:nowrap;letter-spacing:-0.2px;">243,25 €</div>
<div style="position:absolute;left:32px;top:417px;width:9px;height:1px;background:repeating-linear-gradient(90deg,#C4C4C4 0 1px,transparent 1px 2px);"></div>
<svg style="left:41px;top:410px" width="14" height="14" viewBox="0 0 14 14">
<path d="M4.5 0.5 H9.5 L13.5 4.5 V9.5 L9.5 13.5 H4.5 L0.5 9.5 V4.5 Z" fill="#FFFF80" stroke="#0000F0" stroke-width="1"/>
<text x="7" y="13.2" text-anchor="middle" font-family="Liberation Sans" font-size="16" fill="#000" stroke="#000" stroke-width="0.35">4</text></svg>
<div style="position:absolute;left:61px;top:412px;width:197px;overflow:hidden;font-family:'Liberation Sans', sans-serif;font-size:11px;line-height:11px;white-space:nowrap;letter-spacing:-0.2px;">309 - bbbbbbbb</div>
<div style="left:367px;position:absolute;top:412px;font-family:'Liberation Sans', sans-serif;font-size:11px;line-height:11px;font-weight:normal;color:#000;white-space:nowrap;letter-spacing:-0.2px;">Inform.</div>
<div style="position:absolute;left:599px;top:34px;width:3px;height:717px;background:#fff;"></div>
<div style="position:absolute;left:602px;top:34px;width:2px;height:717px;background:linear-gradient(90deg,#A0A0A0,#707070);"></div>
<div style="position:absolute;left:607px;top:32px;width:672px;height:84px;background:#FFCC99;border:2px solid #800000;border-radius:8px;"></div>
<div style="left:612px;position:absolute;top:43px;font-family:'Liberation Sans', sans-serif;font-size:11px;line-height:11px;font-weight:normal;color:#000;white-space:nowrap;letter-spacing:-0.2px;">Coefficient du devis</div>
<div style="position:absolute;left:716px;top:39px;width:43px;height:18px;background:#fff;border:1px solid #7F9DB9;"></div>
<div style="right:526px;position:absolute;top:43px;font-family:'Liberation Sans', sans-serif;font-size:11px;line-height:11px;font-weight:normal;color:#000;white-space:nowrap;letter-spacing:-0.2px;">1,550</div>
<div style="left:772px;position:absolute;top:43px;font-family:'Liberation Sans', sans-serif;font-size:11px;line-height:11px;font-weight:normal;color:#000;white-space:nowrap;letter-spacing:-0.2px;">Prix de l&#x27;heure</div>
<div style="position:absolute;left:847px;top:39px;width:57px;height:18px;background:#fff;border:1px solid #7F9DB9;"></div>
<div style="right:382px;position:absolute;top:43px;font-family:'Liberation Sans', sans-serif;font-size:11px;line-height:11px;font-weight:normal;color:#000;white-space:nowrap;letter-spacing:-0.2px;">25,10 €</div>
<div style="left:911px;position:absolute;top:43px;font-family:'Liberation Sans', sans-serif;font-size:11px;line-height:11px;font-weight:bold;color:#808080;white-space:nowrap;letter-spacing:0.1px;">Prix total</div>
<div style="position:absolute;left:973px;top:39px;width:103px;height:18px;background:#C8C8C8;border:1px solid #7F9DB9;"></div>
<div style="left:725px;width:600px;text-align:center;position:absolute;top:42px;font-family:'Liberation Sans', sans-serif;font-size:12px;line-height:12px;font-weight:bold;color:#000;white-space:nowrap;letter-spacing:0.2px;">3 394,35 €</div>
<div style="position:absolute;left:1079px;top:38px;width:20px;height:20px;background:#F0F0F0;border-top:1px solid #fff;border-left:1px solid #fff;border-right:1px solid #666;border-bottom:1px solid #666;"></div>
<svg style="left:1079px;top:38px" width="20" height="20" viewBox="0 0 20 20">
<path d="M2.5 16.5 L6.5 12.5" stroke="#000" stroke-width="1.2"/>
<path d="M5 12 C5.5 9 8.5 8 11.5 8.5 L16 9.5 L17 15 L12 16.5 L6.5 15.5 Z" fill="#F2C494" stroke="#000" stroke-width="0.9"/>
<path d="M6.8 12.5 L15.8 3.5" stroke="#000" stroke-width="2.8" stroke-linecap="round"/>
<path d="M6.8 12.5 L15.8 3.5" stroke="#FFF000" stroke-width="1.1" stroke-dasharray="0.9 0.5"/>
<path d="M16 10 L18.5 11 L18.5 18 L15 18.5 Z" fill="#FF0000"/>
</svg>
<div style="position:absolute;left:615px;top:67px;width:13px;height:13px;background:#fff;border-top:2px solid #808080;border-left:2px solid #808080;border-right:1px solid #fff;border-bottom:1px solid #fff;"></div>
<div style="left:634px;position:absolute;top:70px;font-family:'Liberation Sans', sans-serif;font-size:11px;line-height:11px;font-weight:normal;color:#000;white-space:nowrap;letter-spacing:-0.2px;">Arrondir les prix à</div>
<div style="left:733px;position:absolute;top:70px;font-family:'Liberation Sans', sans-serif;font-size:11px;line-height:11px;font-weight:bold;color:#000;white-space:nowrap;letter-spacing:0.2px;">1</div>
<div style="left:752px;position:absolute;top:70px;font-family:'Liberation Sans', sans-serif;font-size:11px;line-height:11px;font-weight:normal;color:#000;white-space:nowrap;letter-spacing:-0.2px;">chiffre derrière la virgule</div>
<div style="left:910px;position:absolute;top:71px;font-family:'Liberation Sans', sans-serif;font-size:11px;line-height:11px;font-weight:normal;color:#000;white-space:nowrap;letter-spacing:-0.2px;">Prix vendu</div>
<div style="position:absolute;left:973px;top:67px;width:103px;height:18px;background:#fff;border:1px solid #7F9DB9;"></div>
<div style="position:absolute;left:612px;top:92px;width:150px;height:18px;background:#fff;border:1px solid #7F9DB9;"></div>
<div style="left:615px;position:absolute;top:96px;font-family:'Liberation Sans', sans-serif;font-size:11px;line-height:11px;font-weight:normal;color:#A0A0A0;white-space:nowrap;letter-spacing:-0.2px;">En cours d&#x27;étude</div>
<div style="position:absolute;left:747px;top:94px;width:13px;height:14px;background:#C3D4FB;"></div>
<svg style="left:750px;top:99px" width="9" height="5" viewBox="0 0 9 5"><path d="M0 0 H8 L4 4.5 Z" fill="#8C8C8C"/><path d="M8 0 L4 4.5" stroke="#fff" stroke-width="0.8"/></svg>
<div style="left:857px;position:absolute;top:98px;font-family:'Liberation Sans', sans-serif;font-size:11px;line-height:11px;font-weight:bold;color:#808080;white-space:nowrap;letter-spacing:0.5px;">Prix TTC du devis</div>
<div style="position:absolute;left:973px;top:94px;width:103px;height:18px;background:#C8C8C8;border:1px solid #7F9DB9;"></div>
<div style="left:724px;width:600px;text-align:center;position:absolute;top:98px;font-family:'Liberation Sans', sans-serif;font-size:11px;line-height:11px;font-weight:normal;color:#000;white-space:nowrap;letter-spacing:-0.2px;">3 733,79 €</div>
<div style="position:absolute;left:1109px;top:42px;width:40px;height:40px;background:#C383FF;border-top:2px solid #fff;border-left:2px solid #fff;border-right:2px solid #6E6E6E;border-bottom:2px solid #6E6E6E;"></div>
<svg style="left:1109px;top:42px" width="40" height="40" viewBox="0 0 40 40"><path d="M6 6 H34 V12 H31 V9 H11 L21 20 L11 31 H31 V28 H34 V34 H6 V32 L15.5 20 L6 8 Z" fill="#000"/></svg>
<div style="left:1156px;position:absolute;top:45px;font-family:'Liberation Sans', sans-serif;font-size:11px;line-height:11px;font-weight:normal;color:#000;white-space:nowrap;letter-spacing:-0.2px;">Coefficient de réduction</div>
<div style="position:absolute;left:1186px;top:58px;width:53px;height:18px;background:#fff;border:1px solid #7F9DB9;"></div>
<div style="right:41px;position:absolute;top:62px;font-family:'Liberation Sans', sans-serif;font-size:11px;line-height:11px;font-weight:normal;color:#000;white-space:nowrap;letter-spacing:-0.4px;">100,00 %</div>
<div style="position:absolute;left:1158px;top:93px;width:13px;height:13px;background:#fff;border-top:2px solid #808080;border-left:2px solid #808080;border-right:1px solid #fff;border-bottom:1px solid #fff;"></div>
<svg style="left:1158px;top:93px" width="13" height="13" viewBox="0 0 13 13"><path d="M3 6 L5.5 9 L10 3.5" fill="none" stroke="#000" stroke-width="2"/></svg>
<div style="left:1177px;position:absolute;top:95px;font-family:'Liberation Sans', sans-serif;font-size:11px;line-height:11px;font-weight:normal;color:#000;white-space:nowrap;letter-spacing:-0.2px;">Arrondir prix articles</div>
<div style="left:615px;position:absolute;top:120px;font-family:'Liberation Sans', sans-serif;font-size:11px;line-height:11px;font-weight:normal;color:#000;white-space:nowrap;letter-spacing:-0.2px;">Code série associé</div>
<div style="position:absolute;left:612px;top:133px;width:100px;height:20px;background:#fff;border-top:2px solid #808080;border-left:2px solid #808080;border-right:1px solid #F4F4F4;border-bottom:1px solid #F4F4F4;"></div>
<div style="left:725px;position:absolute;top:120px;font-family:'Liberation Sans', sans-serif;font-size:11px;line-height:11px;font-weight:normal;color:#000;white-space:nowrap;letter-spacing:-0.2px;">Nom article interne</div>
<div style="position:absolute;left:1152px;top:117px;width:13px;height:13px;background:#fff;border-top:2px solid #808080;border-left:2px solid #808080;border-right:1px solid #fff;border-bottom:1px solid #fff;"></div>
<div style="left:1171px;position:absolute;top:119px;font-family:'Liberation Sans', sans-serif;font-size:11px;line-height:11px;font-weight:normal;color:#000;white-space:nowrap;letter-spacing:-0.2px;">En Francs à l&#x27;origine</div>
<div style="position:absolute;left:722px;top:133px;width:550px;height:68px;background:#fff;border-top:2px solid #808080;border-left:2px solid #808080;border-right:1px solid #F4F4F4;border-bottom:1px solid #F4F4F4;"></div>
<div style="position:absolute;left:1254px;top:135px;width:17px;height:64px;background:repeating-conic-gradient(#C8C8C8 0 25%,#FFFFFF 0 50%) 0 0/2px 2px;"></div>
<div style="position:absolute;left:1254px;top:135px;width:17px;height:17px;background:#ECECEC;border-top:1px solid #fff;border-left:1px solid #fff;border-right:2px solid #808080;border-bottom:2px solid #808080;"></div>
<svg style="left:1258px;top:140px" width="8" height="5" viewBox="0 0 8 5"><path d="M0 4.5 H8 L4 0.5 Z" fill="#A0A0A0"/></svg>
<div style="position:absolute;left:1254px;top:182px;width:17px;height:17px;background:#ECECEC;border-top:1px solid #fff;border-left:1px solid #fff;border-right:2px solid #808080;border-bottom:2px solid #808080;"></div>
<svg style="left:1258px;top:188px" width="8" height="5" viewBox="0 0 8 5"><path d="M0 0.5 H8 L4 4.5 Z" fill="#A0A0A0"/></svg>
<div style="left:613px;position:absolute;top:215px;font-family:'Liberation Sans', sans-serif;font-size:11px;line-height:11px;font-weight:normal;color:#000;white-space:nowrap;letter-spacing:-0.2px;">Unité</div>
<div style="position:absolute;left:653px;top:211px;width:97px;height:18px;background:#fff;border:1px solid #5A8CD0;"></div>
<div style="position:absolute;left:735px;top:213px;width:13px;height:14px;background:#C3D4FB;"></div>
<svg style="left:737px;top:218px" width="9" height="6" viewBox="0 0 9 6"><path d="M0.5 0 H8 L4.25 4.5 Z" fill="#000"/></svg>
<div style="left:758px;position:absolute;top:215px;font-family:'Liberation Sans', sans-serif;font-size:11px;line-height:11px;font-weight:normal;color:#000;white-space:nowrap;letter-spacing:-0.2px;">Temps élémentaire</div>
<div style="position:absolute;left:852px;top:211px;width:58px;height:18px;background:#fff;border:1px solid #7F9DB9;"></div>
<div style="left:918px;position:absolute;top:215px;font-family:'Liberation Sans', sans-serif;font-size:11px;line-height:11px;font-weight:normal;color:#000;white-space:nowrap;letter-spacing:-0.2px;">Déboursé</div>
<div style="position:absolute;left:974px;top:211px;width:81px;height:18px;background:#fff;border:1px solid #7F9DB9;"></div>
<div style="left:1061px;position:absolute;top:215px;font-family:'Liberation Sans', sans-serif;font-size:11px;line-height:11px;font-weight:normal;color:#000;white-space:nowrap;letter-spacing:-0.2px;">Prix vente unitaire de l&#x27;article</div>
<div style="position:absolute;left:1199px;top:211px;width:68px;height:18px;background:#fff;border:1px solid #7F9DB9;"></div>
<div style="left:608px;position:absolute;top:243px;font-family:'Liberation Sans', sans-serif;font-size:11px;line-height:11px;font-weight:normal;color:#000;white-space:nowrap;letter-spacing:-0.2px;">Quantité</div>
<div style="position:absolute;left:653px;top:239px;width:97px;height:18px;background:#fff;border:1px solid #7F9DB9;"></div>
<div style="left:758px;position:absolute;top:243px;font-family:'Liberation Sans', sans-serif;font-size:11px;line-height:11px;font-weight:normal;color:#000;white-space:nowrap;letter-spacing:-0.2px;">Prix de vente total</div>
<div style="position:absolute;left:852px;top:239px;width:83px;height:18px;background:#fff;border:1px solid #7F9DB9;"></div>
<div style="left:965px;position:absolute;top:243px;font-family:'Liberation Sans', sans-serif;font-size:11px;line-height:11px;font-weight:normal;color:#000;white-space:nowrap;letter-spacing:-0.2px;">TVA</div>
<div style="position:absolute;left:997px;top:239px;width:52px;height:18px;background:#fff;border:1px solid #7F9DB9;"></div>
<div style="left:1061px;position:absolute;top:243px;font-family:'Liberation Sans', sans-serif;font-size:11px;line-height:11px;font-weight:normal;color:#000;white-space:nowrap;letter-spacing:-0.2px;">Type d&#x27;article</div>
<div style="position:absolute;left:1130px;top:239px;width:137px;height:18px;background:#fff;border:1px solid #5A8CD0;"></div>
<div style="position:absolute;left:1252px;top:241px;width:13px;height:14px;background:#C3D4FB;"></div>
<svg style="left:1254px;top:246px" width="9" height="6" viewBox="0 0 9 6"><path d="M0.5 0 H8 L4.25 4.5 Z" fill="#000"/></svg>
<div style="position:absolute;left:609px;top:269px;width:13px;height:13px;background:#FFFFF0;border:1px solid #5088D0;"></div>
<div style="left:628px;position:absolute;top:271px;font-family:'Liberation Sans', sans-serif;font-size:11px;line-height:11px;font-weight:normal;color:#000;white-space:nowrap;letter-spacing:-0.2px;">Apparaît dans le Devis Simplifié</div>
<div style="left:612px;position:absolute;top:301px;font-family:'Liberation Sans', sans-serif;font-size:11px;line-height:11px;font-weight:normal;color:#000;white-space:nowrap;letter-spacing:-0.2px;">Observations</div>
<div style="position:absolute;left:722px;top:297px;width:553px;height:59px;background:#fff;border:1px solid #7F9DB9;"></div>
<div style="position:absolute;left:1258px;top:314px;width:15px;height:25px;background:#ECE9D8;"></div>
<div style="position:absolute;left:1257px;top:298px;width:17px;height:17px;background:#C3D3FD;border:1px solid #fff;"></div>
<svg style="left:1261px;top:304px" width="9" height="5" viewBox="0 0 9 5"><path d="M0 4.5 H9 L4.5 0 Z" fill="#808080"/></svg>
<div style="position:absolute;left:1257px;top:338px;width:17px;height:17px;background:#C3D3FD;border:1px solid #fff;"></div>
<svg style="left:1261px;top:344px" width="9" height="5" viewBox="0 0 9 5"><path d="M0 0.5 H9 L4.5 5 Z" fill="#808080"/></svg>
<div style="position:absolute;left:610px;top:363px;width:665px;height:336px;background:#ECE9D8;border:1px solid #ACA899;"></div>
<div style="position:absolute;left:611px;top:407px;width:646px;height:274px;background:#fff;"></div>
<div style="position:absolute;left:611px;top:425px;width:646px;height:18px;background:#F0F7FE;"></div>
<div style="position:absolute;left:611px;top:461px;width:646px;height:18px;background:#F0F7FE;"></div>
<div style="position:absolute;left:611px;top:497px;width:646px;height:18px;background:#F0F7FE;"></div>
<div style="position:absolute;left:611px;top:533px;width:646px;height:18px;background:#F0F7FE;"></div>
<div style="position:absolute;left:611px;top:569px;width:646px;height:18px;background:#F0F7FE;"></div>
<div style="position:absolute;left:611px;top:605px;width:646px;height:18px;background:#F0F7FE;"></div>
<div style="position:absolute;left:611px;top:641px;width:646px;height:18px;background:#F0F7FE;"></div>
<div style="position:absolute;left:611px;top:677px;width:646px;height:4px;background:#F0F7FE;"></div>
<div style="position:absolute;left:981px;top:407px;width:52px;height:274px;background:#FFFF99;"></div>
<div style="position:absolute;left:1033px;top:407px;width:51px;height:274px;background:#FFFF99;"></div>
<div style="position:absolute;left:1137px;top:407px;width:50px;height:274px;background:#FFFF99;"></div>
<div style="position:absolute;left:1234px;top:407px;width:23px;height:274px;background:#FFFF99;"></div>
<div style="position:absolute;left:611px;top:364px;width:663px;height:43px;background:linear-gradient(#FAFAF6,#F4F2EA 50%,#ECE9DC);border-bottom:1px solid #808080;"></div>
<div style="position:absolute;left:644px;top:364px;width:1px;height:42px;background:#808080;"></div>
<div style="position:absolute;left:643px;top:365px;width:1px;height:40px;background:#F8F6EA;"></div>
<div style="position:absolute;left:645px;top:365px;width:1px;height:40px;background:#F8F6EA;"></div>
<div style="position:absolute;left:678px;top:364px;width:1px;height:42px;background:#808080;"></div>
<div style="position:absolute;left:677px;top:365px;width:1px;height:40px;background:#F8F6EA;"></div>
<div style="position:absolute;left:679px;top:365px;width:1px;height:40px;background:#F8F6EA;"></div>
<div style="position:absolute;left:980px;top:364px;width:1px;height:42px;background:#808080;"></div>
<div style="position:absolute;left:979px;top:365px;width:1px;height:40px;background:#F8F6EA;"></div>
<div style="position:absolute;left:981px;top:365px;width:1px;height:40px;background:#F8F6EA;"></div>
<div style="position:absolute;left:1032px;top:364px;width:1px;height:42px;background:#808080;"></div>
<div style="position:absolute;left:1031px;top:365px;width:1px;height:40px;background:#F8F6EA;"></div>
<div style="position:absolute;left:1033px;top:365px;width:1px;height:40px;background:#F8F6EA;"></div>
<div style="position:absolute;left:1083px;top:364px;width:1px;height:42px;background:#808080;"></div>
<div style="position:absolute;left:1082px;top:365px;width:1px;height:40px;background:#F8F6EA;"></div>
<div style="position:absolute;left:1084px;top:365px;width:1px;height:40px;background:#F8F6EA;"></div>
<div style="position:absolute;left:1136px;top:364px;width:1px;height:42px;background:#808080;"></div>
<div style="position:absolute;left:1135px;top:365px;width:1px;height:40px;background:#F8F6EA;"></div>
<div style="position:absolute;left:1137px;top:365px;width:1px;height:40px;background:#F8F6EA;"></div>
<div style="position:absolute;left:1186px;top:364px;width:1px;height:42px;background:#808080;"></div>
<div style="position:absolute;left:1185px;top:365px;width:1px;height:40px;background:#F8F6EA;"></div>
<div style="position:absolute;left:1187px;top:365px;width:1px;height:40px;background:#F8F6EA;"></div>
<div style="position:absolute;left:1233px;top:364px;width:1px;height:42px;background:#808080;"></div>
<div style="position:absolute;left:1232px;top:365px;width:1px;height:40px;background:#F8F6EA;"></div>
<div style="position:absolute;left:1234px;top:365px;width:1px;height:40px;background:#F8F6EA;"></div>
<div style="position:absolute;left:644px;top:407px;width:1px;height:274px;background:#DCDCDC;"></div>
<div style="position:absolute;left:678px;top:407px;width:1px;height:274px;background:#DCDCDC;"></div>
<div style="position:absolute;left:980px;top:407px;width:1px;height:274px;background:#DCDCDC;"></div>
<div style="position:absolute;left:1032px;top:407px;width:1px;height:274px;background:#DCDCDC;"></div>
<div style="position:absolute;left:1083px;top:407px;width:1px;height:274px;background:#DCDCDC;"></div>
<div style="position:absolute;left:1136px;top:407px;width:1px;height:274px;background:#DCDCDC;"></div>
<div style="position:absolute;left:1186px;top:407px;width:1px;height:274px;background:#DCDCDC;"></div>
<div style="position:absolute;left:1233px;top:407px;width:1px;height:274px;background:#DCDCDC;"></div>
<div style="left:327px;width:600px;text-align:center;position:absolute;top:380px;font-family:'Liberation Sans', sans-serif;font-size:11px;line-height:11px;font-weight:normal;color:#000;white-space:nowrap;letter-spacing:-0.2px;">Ordre</div>
<div style="left:361px;width:600px;text-align:center;position:absolute;top:380px;font-family:'Liberation Sans', sans-serif;font-size:11px;line-height:11px;font-weight:normal;color:#000;white-space:nowrap;letter-spacing:-0.2px;">Coef.</div>
<div style="left:528px;width:600px;text-align:center;position:absolute;top:380px;font-family:'Liberation Sans', sans-serif;font-size:11px;line-height:11px;font-weight:normal;color:#000;white-space:nowrap;letter-spacing:-0.2px;">Libellé du produit</div>
<div style="left:706px;width:600px;text-align:center;position:absolute;top:380px;font-family:'Liberation Sans', sans-serif;font-size:11px;line-height:11px;font-weight:normal;color:#000;white-space:nowrap;letter-spacing:-0.2px;">U</div>
<div style="left:757px;width:600px;text-align:center;position:absolute;top:380px;font-family:'Liberation Sans', sans-serif;font-size:11px;line-height:11px;font-weight:normal;color:#000;white-space:nowrap;letter-spacing:-0.2px;">Q/U</div>
<div style="left:809px;width:600px;text-align:center;position:absolute;top:380px;font-family:'Liberation Sans', sans-serif;font-size:11px;line-height:11px;font-weight:normal;color:#000;white-space:nowrap;letter-spacing:-0.2px;">Q/U&#x27;</div>
<div style="left:861px;width:600px;text-align:center;position:absolute;top:380px;font-family:'Liberation Sans', sans-serif;font-size:11px;line-height:11px;font-weight:normal;color:#000;white-space:nowrap;letter-spacing:-0.2px;">H</div>
<div style="left:910px;width:600px;text-align:center;position:absolute;top:380px;font-family:'Liberation Sans', sans-serif;font-size:11px;line-height:11px;font-weight:normal;color:#000;white-space:nowrap;letter-spacing:-0.2px;">H&#x27;</div>
<div style="position:absolute;left:1250px;top:380px;font-family:'Liberation Sans', sans-serif;font-size:11px;line-height:11px;">M</div>
<svg style="left:679px;top:364px" width="6" height="8" viewBox="0 0 6 8"><path d="M0 3 L3 0 L6 3 Z M0 5 L3 8 L6 5 Z" fill="#000"/></svg>
<svg style="left:966px;top:376px" width="16" height="16" viewBox="0 0 16 16"><path d="M8.6 8.4 L13.6 13.4" stroke="#000" stroke-width="2.9"/><path d="M8.9 8.7 L13.3 13.1" stroke="#0000F8" stroke-width="1.5"/><circle cx="6.4" cy="6.1" r="3.4" fill="#C4C4C4" stroke="#000" stroke-width="1.1"/><path d="M5 5 A2 2 0 0 1 7.5 4.5" stroke="#eee" stroke-width="0.8" fill="none"/></svg>
<svg style="left:1257px;top:376px" width="14" height="16" viewBox="0 0 14 16"><rect x="0" y="0" width="14" height="16" fill="#F6F5F0" opacity="0.9"/><rect x="3" y="2.5" width="7.5" height="5" fill="#A8B4F8" stroke="#000" stroke-width="1.4"/><rect x="5.5" y="5.5" width="6.5" height="8.5" fill="#A8B4F8" stroke="#000" stroke-width="1.5"/><path d="M7 8 H10.5 M7 10 H10.5 M7 12 H10.5" stroke="#4040A0" stroke-width="0.8"/></svg>
<div style="position:absolute;left:1273px;top:364px;width:1px;height:43px;background:#808080;"></div>
<div style="position:absolute;left:1257px;top:407px;width:17px;height:17px;background:#C3D3FD;border:1px solid #fff;"></div>
<svg style="left:1261px;top:413px" width="9" height="5" viewBox="0 0 9 5"><path d="M0 4.5 H9 L4.5 0 Z" fill="#808080"/></svg>
<div style="position:absolute;left:1257px;top:664px;width:17px;height:17px;background:#C3D3FD;border:1px solid #fff;"></div>
<svg style="left:1261px;top:670px" width="9" height="5" viewBox="0 0 9 5"><path d="M0 0.5 H9 L4.5 5 Z" fill="#808080"/></svg>
<div style="position:absolute;left:611px;top:681px;width:663px;height:17px;background:#ECE9D8;"></div>
<div style="position:absolute;left:611px;top:681px;width:17px;height:17px;background:#C3D3FD;border:1px solid #fff;"></div>
<svg style="left:617px;top:685px" width="5" height="8" viewBox="0 0 5 8"><path d="M4.5 0 V8 L0.5 4 Z" fill="#000"/></svg>
<div style="position:absolute;left:628px;top:681px;width:214px;height:17px;background:#C3D3FD;border:1px solid #fff;"></div>
<div style="position:absolute;left:1240px;top:681px;width:17px;height:17px;background:#C3D3FD;border:1px solid #fff;"></div>
<svg style="left:1246px;top:685px" width="5" height="8" viewBox="0 0 5 8"><path d="M0.5 0 V8 L4.5 4 Z" fill="#000"/></svg>
<div style="position:absolute;left:1257px;top:681px;width:17px;height:17px;background:#C3D3FD;"></div>
<div style="position:absolute;left:610px;top:707px;width:113px;height:39px;background:#ECE9D8;border-top:1px solid #fff;border-left:1px solid #fff;border-right:1px solid #1A1A1A;border-bottom:1px solid #1A1A1A;box-shadow:inset -1px -1px 0 #5A5A5A, inset -2px -2px 0 #F8F5E8, inset 1px 1px 0 #F4F2E8;"></div>
<div style="left:383px;width:600px;text-align:center;position:absolute;top:714px;font-family:'Liberation Sans', sans-serif;font-size:12px;line-height:12px;font-weight:bold;color:#000;white-space:nowrap;letter-spacing:0px;">Réaliser une</div>
<div style="left:383px;width:600px;text-align:center;position:absolute;top:727px;font-family:'Liberation Sans', sans-serif;font-size:12px;line-height:12px;font-weight:bold;color:#000;white-space:nowrap;letter-spacing:0px;">copie</div>
<svg style="left:614px;top:710px" width="30" height="32" viewBox="0 0 30 32">
<defs><linearGradient id="cp" x1="0" y1="0" x2="0" y2="1"><stop offset="0" stop-color="#FF9A00"/><stop offset="1" stop-color="#FFF0A0"/></linearGradient></defs>
<path d="M1 1 H11.5 L16 5.5 V21 H1 Z" fill="url(#cp)" stroke="#fff" stroke-width="0.9"/>
<path d="M11.5 1 L16 5.5 L13 5.5 Z" fill="#FF2000"/>
<path d="M12 10 H23.5 L28 14.5 V30 H12 Z" fill="url(#cp)" stroke="#fff" stroke-width="0.9"/>
<path d="M12.5 10.5 V30" stroke="#FF7000" stroke-width="1.2"/>
<path d="M23.5 10 L28 14.5 L25 14.5 Z" fill="#FF2000"/>
</svg>
<div style="position:absolute;left:739px;top:707px;width:113px;height:39px;background:#ECE9D8;border-top:1px solid #fff;border-left:1px solid #fff;border-right:1px solid #1A1A1A;border-bottom:1px solid #1A1A1A;box-shadow:inset -1px -1px 0 #5A5A5A, inset -2px -2px 0 #F8F5E8, inset 1px 1px 0 #F4F2E8;"></div>
<div style="left:511px;width:600px;text-align:center;position:absolute;top:714px;font-family:'Liberation Sans', sans-serif;font-size:12px;line-height:12px;font-weight:bold;color:#000;white-space:nowrap;letter-spacing:0px;">Options du</div>
<div style="left:511px;width:600px;text-align:center;position:absolute;top:727px;font-family:'Liberation Sans', sans-serif;font-size:12px;line-height:12px;font-weight:bold;color:#000;white-space:nowrap;letter-spacing:0px;">devis</div>
<svg style="left:743px;top:709px" width="30" height="33" viewBox="0 0 30 33">
<defs><linearGradient id="bc" x1="0" y1="1" x2="1" y2="0"><stop offset="0" stop-color="#A0A0A8"/><stop offset="0.5" stop-color="#E4E4E8"/><stop offset="1" stop-color="#FFFFFF"/></linearGradient></defs>
<path d="M9.5 6 V1.5 H16.5 V5" fill="none" stroke="#111" stroke-width="1.3"/>
<path d="M1 4.5 H25.5 L28.5 7 V30 L25.5 31.5 H1 Z" fill="url(#bc)" stroke="#707078" stroke-width="0.8"/>
<path d="M25.5 5 L28.5 7.5 V30 L25.5 31.5 Z" fill="#404048"/>
<path d="M8.4 7 L13 12.7 L8.4 18.5 L3.8 12.7 Z" fill="#E01818" stroke="#B0E0E0" stroke-width="0.6"/>
<path d="M12 12 H15 V18" fill="none" stroke="#A0A0B0" stroke-width="0.7"/>
<rect x="12" y="18" width="9" height="10" fill="#28A8F0"/>
<rect x="12" y="23" width="9" height="5" fill="#0A80E0"/>
</svg>
<div style="position:absolute;left:880px;top:707px;width:139px;height:39px;background:#ECE9D8;border-top:1px solid #fff;border-left:1px solid #fff;border-right:1px solid #1A1A1A;border-bottom:1px solid #1A1A1A;box-shadow:inset -1px -1px 0 #5A5A5A, inset -2px -2px 0 #F8F5E8, inset 1px 1px 0 #F4F2E8;"></div>
<div style="left:666px;width:600px;text-align:center;position:absolute;top:714px;font-family:'Liberation Sans', sans-serif;font-size:12px;line-height:12px;font-weight:bold;color:#000;white-space:nowrap;letter-spacing:0px;">Impressions liées</div>
<div style="left:666px;width:600px;text-align:center;position:absolute;top:727px;font-family:'Liberation Sans', sans-serif;font-size:12px;line-height:12px;font-weight:bold;color:#000;white-space:nowrap;letter-spacing:0px;">au devis</div>
<svg style="left:882px;top:710px" width="34" height="32" viewBox="0 0 34 32">
<path d="M2 3.5 L14 0.5 L18.5 9 L6 13 Z" fill="#fff" stroke="#000" stroke-width="1"/>
<path d="M1.5 12 L17 7.5 L23 13 L9 19 Z" fill="#E4E4E4" stroke="#000" stroke-width="1"/>
<path d="M1.5 12 L1.5 19 L9 26 L9 19 Z" fill="#9A9A9A" stroke="#000" stroke-width="1"/>
<path d="M9 19 L23 13 L23.5 18 L12 24 L9 26 Z" fill="#D8D8D8" stroke="#000" stroke-width="1"/>
<path d="M12.5 23 L21 18.5 L31.5 24 L20 29.5 Z" fill="#FFFFA0" stroke="#000" stroke-width="1"/>
<path d="M14 22.5 L21 19 L24 20.5 L17 24.5 Z" fill="#F0F000"/>
</svg>
<div style="position:absolute;left:1037px;top:707px;width:131px;height:39px;background:#ECE9D8;border-top:1px solid #fff;border-left:1px solid #fff;border-right:1px solid #1A1A1A;border-bottom:1px solid #1A1A1A;box-shadow:inset -1px -1px 0 #5A5A5A, inset -2px -2px 0 #F8F5E8, inset 1px 1px 0 #F4F2E8;"></div>
<div style="left:820px;width:600px;text-align:center;position:absolute;top:714px;font-family:'Liberation Sans', sans-serif;font-size:12px;line-height:12px;font-weight:bold;color:#000;white-space:nowrap;letter-spacing:0px;">Changer la TVA</div>
<div style="left:820px;width:600px;text-align:center;position:absolute;top:727px;font-family:'Liberation Sans', sans-serif;font-size:12px;line-height:12px;font-weight:bold;color:#000;white-space:nowrap;letter-spacing:0px;">des lignes</div>
<svg style="left:1036px;top:706px" width="40" height="40" viewBox="0 0 40 40">
<defs><linearGradient id="gr" x1="0" y1="0" x2="0" y2="1"><stop offset="0" stop-color="#B8F8A8"/><stop offset="1" stop-color="#38D020"/></linearGradient></defs>
<path d="M28 9.5 C24 3.5 14 4 9 11 L4.3 10.4 L7.5 18 L17 17.5 L13.5 15 C17 9.5 23 8.5 28 9.5 Z" fill="url(#gr)" stroke="#3A7A3A" stroke-width="0.7"/>
<path d="M12.5 30.5 C17 36 27 34.5 31 26 L35.2 26.5 L31.5 20 L22 20.5 L25.5 22.5 C22.5 29 17 31 12.5 30.5 Z" fill="url(#gr)" stroke="#3A7A3A" stroke-width="0.7"/>
</svg>
<svg style="left:1194px;top:706px" width="40" height="40" viewBox="0 0 40 40">
<path d="M4.5 5.5 H31 L36 11 L31 17 H4.5 Z" fill="#B07A18" stroke="#000" stroke-width="1"/>
<path d="M5.5 6.5 H30.5" stroke="#F0C040" stroke-width="0.8"/>
<text x="17" y="14.2" text-anchor="middle" font-family="Liberation Mono" font-weight="bold" font-size="7.2" fill="#fff" letter-spacing="-0.4">SORTIE</text>
<rect x="14.5" y="17.5" width="5.5" height="18" fill="#C88A20" stroke="#000" stroke-width="1"/>
<path d="M5.5 34 C5 29 9 29 10 32 M22 34 C23 26 26 26 27 31 M28 32 C30 27 32 28 34 31" fill="none" stroke="#000" stroke-width="0.9"/>
<path d="M5 34.5 C8 31 12 32 14 33 M21 33 C24 30 28 33 31 33.5 H35" fill="none" stroke="#20C020" stroke-width="2"/>
<path d="M4.5 35.5 H35.5" stroke="#000" stroke-width="1"/>
</svg>
<div style="left:1236px;position:absolute;top:721px;font-family:'Liberation Sans', sans-serif;font-size:11px;line-height:11px;font-weight:normal;color:#000;white-space:nowrap;letter-spacing:-0.2px;">Quitter</div>
</body></html>
